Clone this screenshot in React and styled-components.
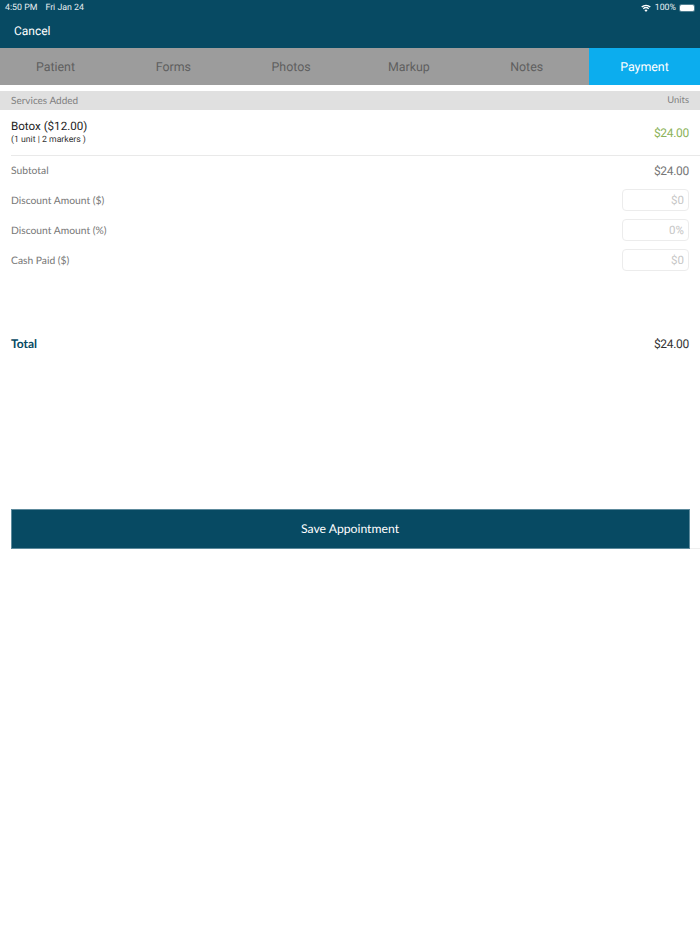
import styled, { createGlobalStyle } from "styled-components";

const GlobalStyle = createGlobalStyle`
  html, body {
    margin: 0;
    background: #fff;
    text-rendering: geometricPrecision;
  }
  button {
    text-rendering: geometricPrecision;
  }
`;

const Page = styled.div`
  width: 700px;
  height: 934px;
  overflow: hidden;
  background: #fff;
  font-family: Lato, "Open Sans", sans-serif;
`;

const Header = styled.header`
  height: 48px;
  background: #074a63;
  color: #fff;
  font-family: Roboto, sans-serif;
`;

const StatusBar = styled.div`
  height: 14px;
  box-sizing: border-box;
  padding: 1px 6px 0 5px;
  display: flex;
  align-items: center;
  justify-content: space-between;
  font-size: 8.8px;
  color: #e6eef1;
`;

const StatusGroup = styled.div`
  display: flex;
  align-items: center;
  gap: ${({ $gap }) => $gap}px;
`;

const Battery = styled.span`
  display: block;
  width: 14px;
  height: 6px;
  background: #fff;
  border-radius: 1.5px;
  box-shadow: 0 0 0 1px #4f7f92;
`;

const CancelRow = styled.div`
  padding: 10px 0 0 14px;
  font-size: 12px;
  line-height: 15px;
`;

const Tabs = styled.nav`
  height: 37px;
  background: #9c9c9c;
  display: flex;
  justify-content: space-between;
  font-family: Roboto, sans-serif;
`;

const Tab = styled.div`
  width: 111px;
  padding-top: 1px;
  display: flex;
  align-items: center;
  justify-content: center;
  font-size: 12.4px;
  background: ${({ $active }) => ($active ? "#0cadee" : "transparent")};
  color: ${({ $active }) => ($active ? "#fff" : "#5f5f5f")};
`;

const SectionHead = styled.div`
  margin-top: 6px;
  height: 19px;
  padding: 0 11px;
  box-sizing: border-box;
  background: #e0e0e0;
  display: flex;
  align-items: center;
  justify-content: space-between;
  font-size: 10px;
  color: #808080;
`;

const UnitsLabel = styled.span`
  font-size: 9.4px;
`;

const ServiceRow = styled.div`
  height: 46px;
  margin-left: 11px;
  padding-right: 11px;
  box-sizing: border-box;
  border-bottom: 1px solid #e9e9e9;
  display: flex;
  align-items: center;
  justify-content: space-between;
`;

const ServiceName = styled.div`
  font-family: Roboto, sans-serif;
  font-size: 11.6px;
  line-height: 15px;
  color: #1d1d1d;
`;

const ServiceMeta = styled.div`
  margin-top: 1px;
  font-family: Roboto, sans-serif;
  font-size: 8.7px;
  line-height: 11px;
  color: #333;
`;

const Amount = styled.div`
  padding-top: ${({ $drop }) => ($drop ? 1 : 0)}px;
  font-family: Roboto, sans-serif;
  font-size: 12px;
  letter-spacing: -0.3px;
  color: ${({ $color }) => $color};
`;

const Row = styled.div`
  height: ${({ $short }) => ($short ? 29 : 30)}px;
  padding: 0 11px;
  display: flex;
  align-items: center;
  justify-content: space-between;
  font-size: 10.3px;
  color: #777;
`;

const InputLabel = styled.span`
  padding-top: 1px;
`;

const FakeInput = styled.div`
  width: 67px;
  height: 22px;
  box-sizing: border-box;
  padding-right: 4px;
  border: 1px solid #ececec;
  border-radius: 4px;
  display: flex;
  align-items: center;
  justify-content: flex-end;
  font-family: Roboto, sans-serif;
  font-size: 11.5px;
  color: #c6c6c6;
`;

const TotalRow = styled(Row)`
  margin-top: 53px;
`;

const TotalLabel = styled.div`
  font-size: 12px;
  font-weight: 700;
  color: #074a63;
`;

const SaveButton = styled.button`
  display: block;
  width: 679px;
  height: 40px;
  margin: 151px 0 0 10.5px;
  padding: 0 0 1px;
  border: 1px solid #5d8a9c;
  border-radius: 0;
  background: #074a63;
  color: #fff;
  font-family: Lato, "Open Sans", sans-serif;
  font-size: 12.2px;
`;

const ButtonRule = styled.div`
  height: 1px;
  margin: -1px 0 0 690px;
  background: #efefef;
`;

const tabs = ["Patient", "Forms", "Photos", "Markup", "Notes", "Payment"];

const inputs = [
  ["Discount Amount ($)", "$0"],
  ["Discount Amount (%)", "0%"],
  ["Cash Paid ($)", "$0"],
];

const WifiIcon = () => (
  <svg width="10" height="8" viewBox="0 0 10 8" fill="#fff">
    <path d="M5 8 3.4 6.1a2.5 2.5 0 0 1 3.2 0Z" />
    <path d="M2.7 5.3 1.8 4.2a5 5 0 0 1 6.4 0L7.3 5.3a3.6 3.6 0 0 0-4.6 0Z" />
    <path d="M1.2 3.5.2 2.4a7.5 7.5 0 0 1 9.6 0L8.8 3.5a6 6 0 0 0-7.6 0Z" />
  </svg>
);

export default function App() {
  return (
    <Page>
      <GlobalStyle />
      <Header>
        <StatusBar>
          <StatusGroup $gap={8}>
            <span>4:50 PM</span>
            <span>Fri Jan 24</span>
          </StatusGroup>
          <StatusGroup $gap={4}>
            <WifiIcon />
            <span>100%</span>
            <Battery />
          </StatusGroup>
        </StatusBar>
        <CancelRow>Cancel</CancelRow>
      </Header>
      <Tabs>
        {tabs.map((name) => (
          <Tab key={name} $active={name === "Payment"}>
            {name}
          </Tab>
        ))}
      </Tabs>
      <SectionHead>
        <span>Services Added</span>
        <UnitsLabel>Units</UnitsLabel>
      </SectionHead>
      <ServiceRow>
        <div>
          <ServiceName>Botox ($12.00)</ServiceName>
          <ServiceMeta>(1 unit | 2 markers )</ServiceMeta>
        </div>
        <Amount $color="#8cb35a">$24.00</Amount>
      </ServiceRow>
      <Row $short>
        <span>Subtotal</span>
        <Amount $color="#777">$24.00</Amount>
      </Row>
      {inputs.map(([label, value]) => (
        <Row key={label}>
          <InputLabel>{label}</InputLabel>
          <FakeInput>{value}</FakeInput>
        </Row>
      ))}
      <TotalRow>
        <TotalLabel>Total</TotalLabel>
        <Amount $color="#333" $drop>$24.00</Amount>
      </TotalRow>
      <SaveButton>Save Appointment</SaveButton>
      <ButtonRule />
    </Page>
  );
}
